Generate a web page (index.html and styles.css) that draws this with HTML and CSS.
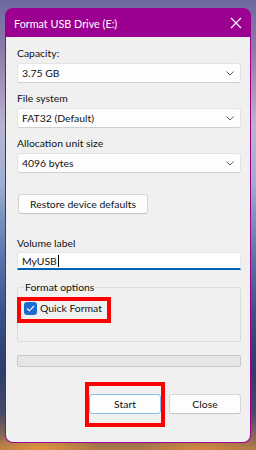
FILE: index.html
```html
<!DOCTYPE html>
<html>
<head>
<meta charset="utf-8">
<link rel="stylesheet" href="styles.css">
</head>
<body>
<div class="dialog">
  <div class="titlebar">
    <span class="title">Format USB Drive (E:)</span>
    <svg class="close" width="12" height="12" viewBox="0 0 12 12"><path d="M1 1 L11 11 M11 1 L1 11" stroke="#fff" stroke-width="1.2" fill="none"/></svg>
  </div>
  <div class="body">
    <div class="label">Capacity:</div>
    <div class="select"><span>3.75 GB</span><svg class="chev" width="8" height="5" viewBox="0 0 8 5"><path d="M0.5 0.5 L4 4 L7.5 0.5" stroke="#606060" stroke-width="1" fill="none"/></svg></div>
    <div class="label">File system</div>
    <div class="select"><span>FAT32 (Default)</span><svg class="chev" width="8" height="5" viewBox="0 0 8 5"><path d="M0.5 0.5 L4 4 L7.5 0.5" stroke="#606060" stroke-width="1" fill="none"/></svg></div>
    <div class="label">Allocation unit size</div>
    <div class="select"><span>4096 bytes</span><svg class="chev" width="8" height="5" viewBox="0 0 8 5"><path d="M0.5 0.5 L4 4 L7.5 0.5" stroke="#606060" stroke-width="1" fill="none"/></svg></div>
    <div class="btn restore">Restore device defaults</div>
    <div class="label vol">Volume label</div>
    <div class="input"><span>MyUSB</span><span class="caret"></span></div>
    <fieldset class="group">
      <legend>Format options</legend>
      <div class="check-row">
        <span class="checkbox"><svg width="9" height="7" viewBox="0 0 9 7"><path d="M1 3.5 L3.3 5.8 L8 1" stroke="#fff" stroke-width="1.1" fill="none"/></svg></span>
        <span>Quick Format</span>
        <span class="highlight hl-check"></span>
      </div>
    </fieldset>
    <div class="progress"></div>
    <div class="actions">
      <div class="btn action primary">Start<span class="highlight hl-start"></span></div>
      <div class="btn action">Close</div>
    </div>
  </div>
</div>
</body>
</html>
```
FILE: styles.css
```css
html, body {
  margin: 0;
  padding: 0;
}
body {
  width: 256px;
  height: 450px;
  overflow: hidden;
  font-family: "Lato", "Noto Sans", sans-serif;
  font-size: 10.4px;
  color: #111;
  background:
    radial-gradient(ellipse 60px 14px at 40px 448px, rgba(230,150,60,0.9), rgba(230,150,60,0) 100%),
    radial-gradient(ellipse 60px 12px at 200px 449px, rgba(220,140,60,0.8), rgba(220,140,60,0) 100%),
    linear-gradient(180deg, #6c6aa0 0%, #8a78a8 10%, #a58fb6 18%, #b8b4d0 28%, #9fb0d2 40%, #5f7bb0 55%, #3a5088 70%, #2c3d6c 82%, #4a4a6a 92%, #b07a48 100%);
}
.dialog {
  margin: 8px 5px 0 5px;
  width: 246px;
  height: 435px;
  border-radius: 8px;
  overflow: hidden;
  background: #9c0090;
  display: flex;
  flex-direction: column;
}
.titlebar {
  height: 29px;
  flex: none;
  display: flex;
  align-items: center;
  justify-content: space-between;
  padding: 0 9px 0 9px;
  color: #fff;
}
.title {
  font-size: 10.8px;
  padding-top: 1px;
}
.close {
  margin-top: 1px;
}
.body {
  flex: 1;
  margin: 0 1px 1px 1px;
  border-radius: 0 0 7px 7px;
  background: #f0f0f0;
  padding: 1px 9px 0 11px;
  display: flex;
  flex-direction: column;
}
.label {
  height: 15px;
  line-height: 15px;
  margin-top: 8px;
  margin-bottom: 2px;
}
.select {
  height: 20px;
  box-sizing: border-box;
  background: #fdfdfd;
  border: 1px solid #e3e3e3;
  border-bottom-color: #cfcfcf;
  border-radius: 3px;
  display: flex;
  align-items: center;
  justify-content: space-between;
  padding: 0 6px 0 4px;
}
.chev {
  margin-top: 1px;
}
.btn {
  box-sizing: border-box;
  height: 20px;
  background: #fdfdfd;
  border: 1px solid #d6d6d6;
  border-bottom-color: #c4c4c4;
  border-radius: 3px;
  display: flex;
  align-items: center;
  justify-content: center;
}
.restore {
  width: 130px;
  margin-top: 21px;
  margin-left: 1px;
}
.label.vol {
  margin-top: 22px;
  margin-bottom: 1px;
}
.input {
  height: 18px;
  box-sizing: border-box;
  background: #fff;
  border: 1px solid #e6e6e6;
  border-bottom: 2px solid #0063b1;
  border-radius: 3px 3px 0 0;
  display: flex;
  align-items: center;
  padding-left: 4px;
}
.caret {
  width: 1px;
  height: 12px;
  background: #000;
  margin-left: 1px;
}
.group {
  margin: 10px 0 0 0;
  padding: 6px 6px 0 6px;
  border: 1px solid #dcdcdc;
  border-radius: 2px;
  height: 62px;
  box-sizing: border-box;
}
.group legend {
  padding: 0 1px;
  line-height: 14px;
}
.check-row {
  position: relative;
  display: flex;
  align-items: center;
  gap: 3px;
  height: 16px;
}
.checkbox {
  width: 13px;
  height: 13px;
  border-radius: 3px;
  background: #1a6ccf;
  display: flex;
  align-items: center;
  justify-content: center;
}
.highlight {
  position: absolute;
  border: 4px solid #ff0000;
  box-sizing: border-box;
  pointer-events: none;
}
.hl-check {
  left: -7px;
  top: -3px;
  width: 94px;
  height: 26px;
}
.progress {
  margin-top: 13px;
  height: 12px;
  box-sizing: border-box;
  background: #e6e6e6;
  border: 1px solid #c8c8c8;
  border-radius: 2px;
}
.actions {
  margin-top: 27px;
  display: flex;
  justify-content: flex-end;
  gap: 8px;
}
.action {
  position: relative;
  width: 72px;
}
.primary {
  border-color: #8cbae6;
}
.hl-start {
  left: -5px;
  top: -13px;
  width: 80px;
  height: 45px;
}
```
